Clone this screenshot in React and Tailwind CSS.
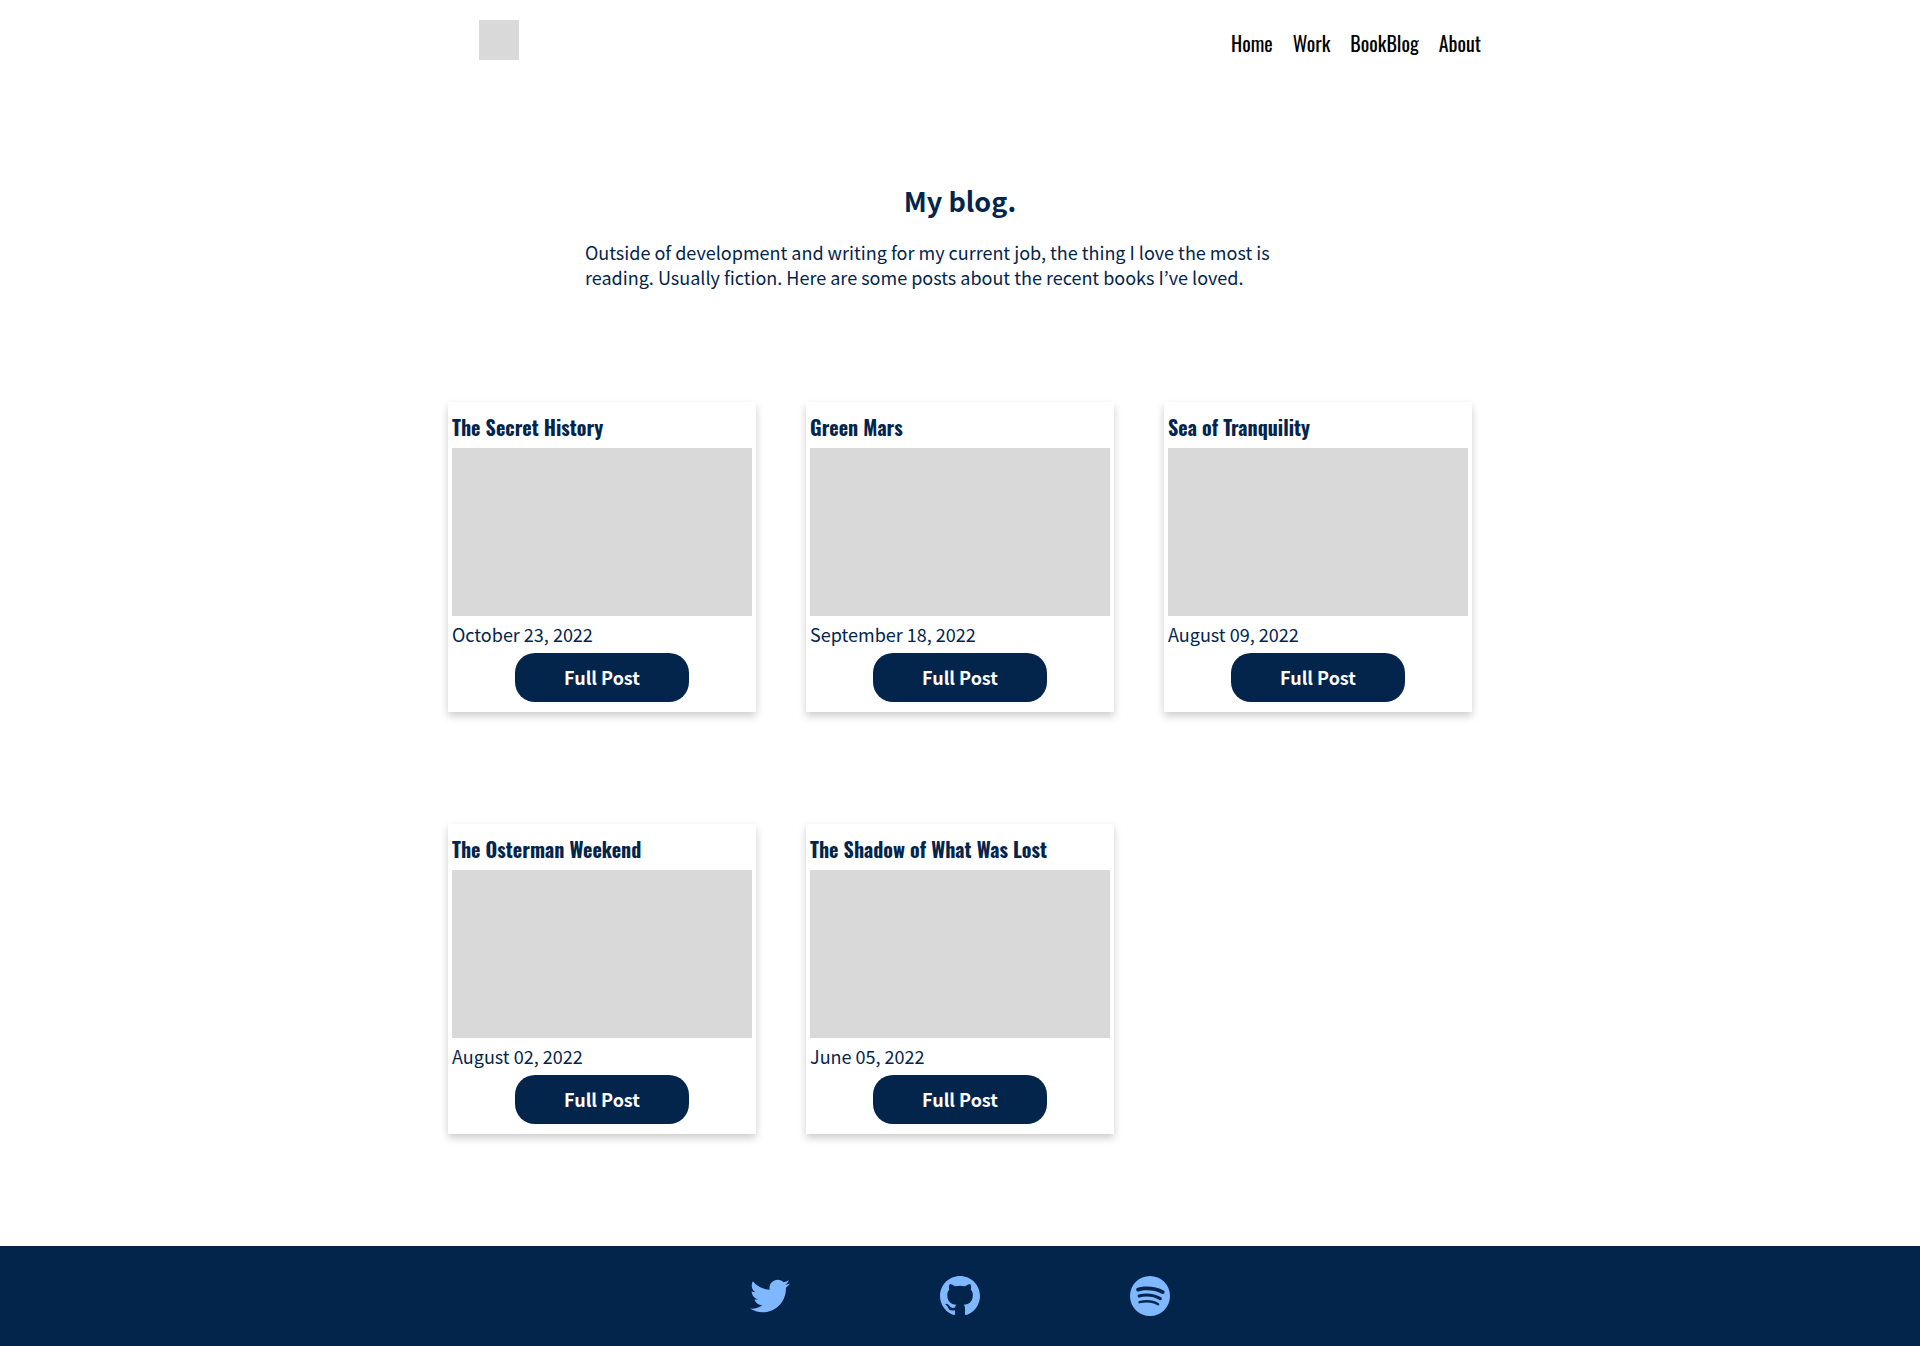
import { BsGithub, BsSpotify } from "react-icons/bs";
import { FaTwitter } from "react-icons/fa";

const links = ["Home", "Work", "BookBlog", "About"];

const posts = [
  { title: "The Secret History", date: "October 23, 2022" },
  { title: "Green Mars", date: "September 18, 2022" },
  { title: "Sea of Tranquility", date: "August 09, 2022" },
  { title: "The Osterman Weekend", date: "August 02, 2022" },
  { title: "The Shadow of What Was Lost", date: "June 05, 2022" },
];

const socials = [
  { name: "Twitter", Icon: FaTwitter },
  { name: "GitHub", Icon: BsGithub },
  { name: "Spotify", Icon: BsSpotify },
];

function PostCard({ title, date }) {
  return (
    <article className="flex w-[308px] flex-col bg-white px-1 pb-2.5 shadow-[0_4px_8px_0_rgba(0,0,0,0.2)]">
      <h2 className="pt-2 pb-1 font-['Oswald','Liberation_Sans_Narrow',sans-serif] text-[20px] leading-[34px] font-bold whitespace-nowrap">
        {title}
      </h2>
      <div className="h-[168px] bg-[#d9d9d9]" />
      <p className="py-[5px] text-[18px] leading-[27px]">{date}</p>
      <button
        type="button"
        className="h-[49px] w-[174px] self-center rounded-[20px] bg-[#03254c] text-[18px] font-bold text-white"
      >
        Full Post
      </button>
    </article>
  );
}

export default function App() {
  return (
    <div className="flex min-h-screen flex-col bg-white font-['Source_Sans_Pro','Noto_Sans_CJK_JP',sans-serif] text-[#03254c]">
      <header className="mx-auto flex w-full max-w-[1042px] items-center justify-between py-5 pl-10">
        <div className="size-10 bg-[#d9d9d9]" />
        <nav className="flex gap-5 pt-1.5 font-['Oswald','Liberation_Sans_Narrow',sans-serif] text-[20px] leading-8 text-black">
          {links.map((label) => (
            <a key={label} href="#">
              {label}
            </a>
          ))}
        </nav>
      </header>

      <main className="flex flex-col items-center px-4">
        <h1 className="pt-[101px] text-[27px] leading-10 font-bold">My blog.</h1>
        <p className="w-full max-w-[750px] pt-[19px] text-[18px] leading-[25px]">
          Outside of development and writing for my current job, the thing I love the most is
          reading. Usually fiction. Here are some posts about the recent books I’ve loved.
        </p>
        <section className="flex w-full max-w-[1024px] flex-wrap gap-x-[50px] gap-y-28 py-28">
          {posts.map((post) => (
            <PostCard key={post.title} {...post} />
          ))}
        </section>
      </main>

      <footer className="flex h-[100px] items-center justify-center gap-[150px] bg-[#03254c] text-[#7fb8ff]">
        {socials.map(({ name, Icon }) => (
          <a key={name} href="#" aria-label={name}>
            <Icon className="size-10" />
          </a>
        ))}
      </footer>
    </div>
  );
}
